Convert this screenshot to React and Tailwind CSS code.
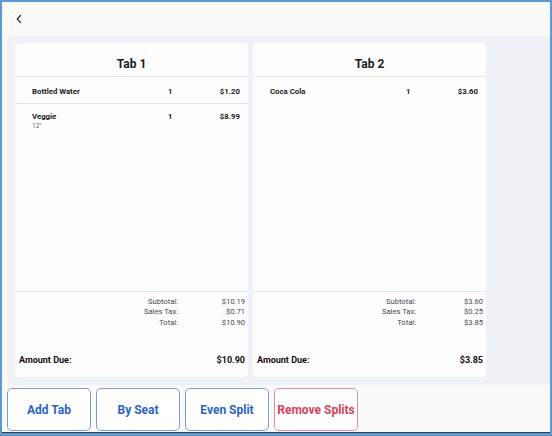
import React from 'react';

const tabs = [
  {
    title: 'Tab 1',
    items: [
      { name: 'Bottled Water', qty: 1, price: '$1.20' },
      { name: 'Veggie', note: '12"', qty: 1, price: '$8.99' },
    ],
    subtotal: '$10.19',
    tax: '$0.71',
    total: '$10.90',
  },
  {
    title: 'Tab 2',
    items: [{ name: 'Coca Cola', qty: 1, price: '$3.60' }],
    subtotal: '$3.60',
    tax: '$0.25',
    total: '$3.85',
  },
];

function TabCard({ tab }) {
  const multi = tab.items.length > 1;
  return (
    <div className="w-[233px] h-[334px] bg-[#fdfdfd] rounded-[4px] flex flex-col">
      <div className="h-[34px] pt-[15px] border-b border-[#e2e7ee] text-center text-[12px] leading-[12px] font-bold text-[#1c1c1c]">
        {tab.title}
      </div>
      <div className="flex-1">
        {tab.items.map((item, i) => (
          <div
            key={i}
            className={`flex pl-[17px] pr-[8px] pb-[6px] text-[7.8px] leading-[10px] font-bold text-[#1c1c1c] ${
              i === 0 ? 'pt-[10px]' : 'pt-[8px]'
            } ${multi && i === 0 ? 'border-b border-[#e2e7ee]' : ''}`}
          >
            <div className="flex-1">
              <div>{item.name}</div>
              {item.note && (
                <div className="font-normal text-[6.5px] leading-[8px] text-[#666]">{item.note}</div>
              )}
            </div>
            <div className="w-[40px]">{item.qty}</div>
            <div className="w-[32px] text-right">{item.price}</div>
          </div>
        ))}
      </div>
      <div className="h-[86px] border-t border-[#dde6ec] flex flex-col">
        <div className="pt-[5px] text-[7.6px] leading-[10.4px] text-[#4a4a4a]">
          {[
            ['Subtotal:', tab.subtotal],
            ['Sales Tax:', tab.tax],
            ['Total:', tab.total],
          ].map(([label, value]) => (
            <div key={label} className="flex justify-end pr-[3px]">
              <span className="text-right">{label}</span>
              <span className="w-[67px] text-right">{value}</span>
            </div>
          ))}
        </div>
        <div className="mt-auto pb-[11px] pl-[4px] pr-[3px] flex justify-between text-[9px] leading-[12px] font-bold text-[#111]">
          <span>Amount Due:</span>
          <span>{tab.total}</span>
        </div>
      </div>
    </div>
  );
}

export default function App() {
  const buttons = [
    { label: 'Add Tab', danger: false },
    { label: 'By Seat', danger: false },
    { label: 'Even Split', danger: false },
    { label: 'Remove Splits', danger: true },
  ];

  return (
    <div
      className="w-[552px] h-[436px] border-[#5b9bd5] border-l-2 border-t-2 border-r-2 border-b-[3px] bg-[#fafafa] flex flex-col overflow-hidden"
      style={{ fontFamily: 'Roboto, "Liberation Sans", sans-serif' }}
    >
      <div className="h-[34px] shrink-0 flex items-center pl-[13px]">
        <svg width="8" height="10" viewBox="0 0 8 10" fill="none">
          <path d="M5.5 1.5 L2.2 5 L5.5 8.5" stroke="#333" strokeWidth="1.3" strokeLinecap="round" strokeLinejoin="round" />
        </svg>
      </div>
      <div className="h-[349px] shrink-0 ml-[5px] bg-[#eef1f6] rounded-l-[6px] pl-[8px] pt-[7px] flex gap-[5px]">
        {tabs.map((tab) => (
          <TabCard key={tab.title} tab={tab} />
        ))}
      </div>
      <div className="flex-1 flex gap-[5px] pl-[5px] pt-[3px] items-start">
        {buttons.map((b) => (
          <button
            key={b.label}
            className={`w-[84px] h-[43px] rounded-[5px] border-[1.5px] bg-white text-[12px] font-bold ${
              b.danger ? 'border-[#e48ba0] text-[#d8415f]' : 'border-[#7c9dd6] text-[#2c63c9]'
            }`}
          >
            {b.label}
          </button>
        ))}
      </div>
      <div className="h-px shrink-0 bg-[#3a3a3a]" />
    </div>
  );
}
